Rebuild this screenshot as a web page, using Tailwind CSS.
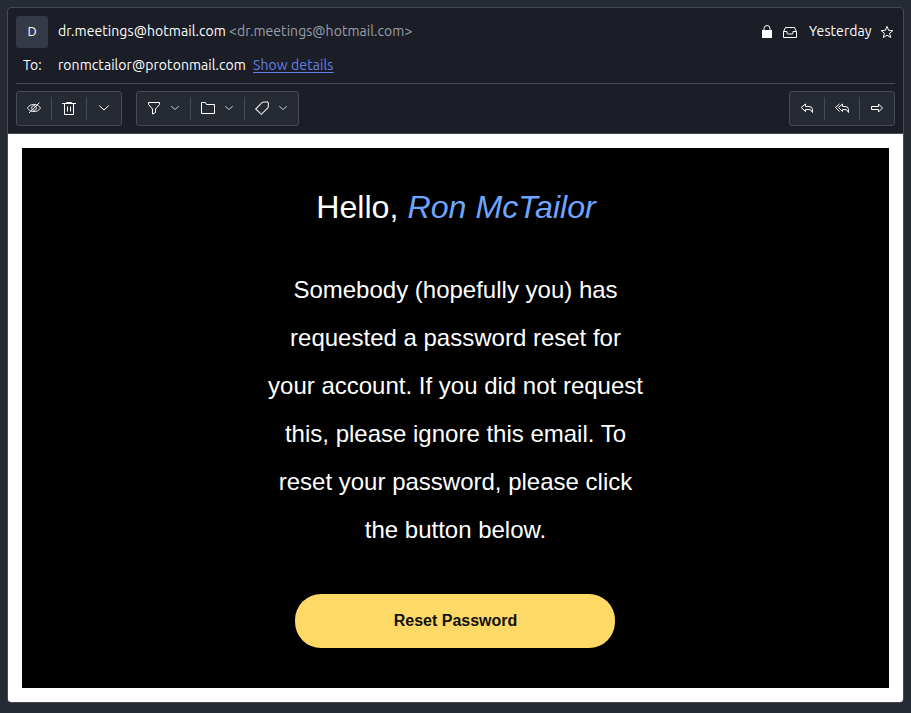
<!DOCTYPE html>
<html lang="en"><head><meta charset="utf-8"><title>Message</title>
<script src="https://cdn.jsdelivr.net/npm/@tailwindcss/browser@4"></script></head>
<body class="bg-[#262a33] h-[713px] overflow-hidden p-[7px] font-['Ubuntu','Open_Sans',sans-serif] text-[14px] text-white">
<main class="w-[897px] h-[696px] border border-[#464a55] rounded-[4px] overflow-hidden bg-[#1b1e26] flex flex-col">
<header class="h-[126px] shrink-0 border-b border-[#464a55] px-2 pt-2">
  <div class="flex h-8 items-start">
    <div class="w-8 h-8 rounded-[3px] bg-[#363a46] flex items-center justify-center text-[13px]">D</div>
    <div class="ml-[10px] pt-[5px] leading-5 w-[168px] whitespace-nowrap tracking-[0.07px]">dr.meetings@hotmail.com</div>
    <div class="ml-[3px] pt-[5px] leading-5 whitespace-nowrap tracking-[0.05px] text-[#9b9fab]">&lt;dr.meetings@hotmail.com&gt;</div>
    <div class="ml-auto flex items-start">
      <svg class="w-4 h-4 mt-2" viewBox="0 0 16 16"><path d="M3 6h10v8H3z" fill="#fff"/><path d="M5 6V4.500a3 3 0 0 1 6 0V6" fill="none" stroke="#fff"/></svg>
      <svg class="w-4 h-4 mt-2 ml-[7px]" viewBox="0 0 16 16" fill="none" stroke="#fff"><path d="M1.500 13.500v-6l2-4h9l2 4v6zM1.500 7.500H5v1.500q0 1 1 1h4q1 0 1-1V7.500h3.500"/></svg>
      <span class="ml-[11px] pt-[5px] leading-5 w-[63px] whitespace-nowrap tracking-[0.08px]">Yesterday</span>
      <svg class="w-4 h-4 mt-2 ml-[7px]" viewBox="0 0 16 16" fill="none" stroke="#fff"><path d="M8 2.400 9.600 6.300l4.300.3-3.300 2.700 1.100 4.200L8 11.200l-3.700 2.300 1.100-4.200-3.300-2.700 4.300-.3z"/></svg>
    </div>
  </div>
  <div class="flex h-9 pl-[7px] pt-[7px] border-b border-[#464a55] leading-5 whitespace-nowrap">
    <span class="w-[35px]">To:</span><span class="w-[195px] tracking-[0.06px]">ronmctailor@protonmail.com</span><a class="text-[#657ee4] underline underline-offset-2 tracking-[0.1px]">Show details</a>
  </div>
  <div class="flex mt-[7px]">
    <div class="w-[106px] h-[35px] border border-[#464a55] rounded-[3px] bg-[#262a33] flex items-start">
      <div class="w-[34px] pt-2 flex justify-center"><svg class="w-4 h-4" viewBox="0 0 16 16" fill="none" stroke="#e4e5e8"><path d="M1.500 8C4 3.200 12 3.200 14.500 8 12 12.800 4 12.800 1.500 8zM3 13 13.500 2.500"/><circle cx="8" cy="8" r="2.400"/></svg></div>
      <i class="w-px h-[23px] mt-[5px] bg-[#464a55]"></i>
      <div class="w-[34px] pt-2 flex justify-center"><svg class="w-4 h-4" viewBox="0 0 16 16" fill="none" stroke="#fff"><path d="M1 3.500h14M5.500 3.500v-1h5v1M3.500 3.500v11h9v-11M6.500 6.500v5M9.500 6.500v5"/></svg></div>
      <i class="w-px h-[23px] mt-[5px] bg-[#464a55]"></i>
      <div class="w-[34px] pt-2 flex justify-center"><svg class="w-4 h-4" viewBox="0 0 16 16" fill="none" stroke="#fff"><path d="m3.200 5.500 4.800 4.500 4.800-4.500"/></svg></div>
    </div>
    <div class="ml-[14px] w-[163px] h-[35px] border border-[#464a55] rounded-[3px] bg-[#262a33] flex items-start">
      <div class="w-[53px] pt-2 pl-[9px] flex"><svg class="w-4 h-4" viewBox="0 0 16 16" fill="none" stroke="#fff"><path d="M2.500 2.500h11v2l-4 4.500v3.500l-3 1.500V9l-4-4.500z"/></svg><svg class="w-4 h-4 ml-[5px]" viewBox="0 0 16 16" fill="none" stroke="#c6c8cd"><path d="M4.200 6.200 8 9.500l3.800-3.300"/></svg></div>
      <i class="w-px h-[23px] mt-[5px] bg-[#464a55]"></i>
      <div class="w-[53px] pt-2 pl-[9px] flex"><svg class="w-4 h-4" viewBox="0 0 16 16" fill="none" stroke="#fff"><path d="M1.500 13.500v-11h4l1 2h8v9z"/></svg><svg class="w-4 h-4 ml-[5px]" viewBox="0 0 16 16" fill="none" stroke="#c6c8cd"><path d="M4.200 6.200 8 9.500l3.800-3.300"/></svg></div>
      <i class="w-px h-[23px] mt-[5px] bg-[#464a55]"></i>
      <div class="w-[53px] pt-2 pl-[9px] flex"><svg class="w-4 h-4" viewBox="0 0 16 16" fill="none" stroke="#e8e8e8" stroke-width="1.100"><path d="m1.700 9 6.800-6.800 4.700-.4 1.300 1.400-.3 4.300-6.800 6.800z"/></svg><svg class="w-4 h-4 ml-[5px]" viewBox="0 0 16 16" fill="none" stroke="#c6c8cd"><path d="M4.200 6.200 8 9.500l3.800-3.300"/></svg></div>
    </div>
    <div class="ml-auto w-[106px] h-[35px] border border-[#464a55] rounded-[3px] bg-[#262a33] flex items-start">
      <div class="w-[34px] pt-2 flex justify-center"><svg class="w-4 h-4" viewBox="0 0 16 16" fill="none" stroke="#fff"><path d="M6.500 4 2.200 7.500l4.300 4V9.500H10q2.500 0 3.500 3v-3q0-3-3.500-3H6.500z"/></svg></div>
      <i class="w-px h-[23px] mt-[5px] bg-[#464a55]"></i>
      <div class="w-[34px] pt-2 flex justify-center"><svg class="w-4 h-4" viewBox="0 0 16 16" fill="none" stroke="#fff"><path d="M8.500 4 4.500 7.500l4 4V9.500H11q2.500 0 3.500 3v-3q0-3-3.500-3H8.500zM5.500 4l-4 3.500 4 4"/></svg></div>
      <i class="w-px h-[23px] mt-[5px] bg-[#464a55]"></i>
      <div class="w-[34px] pt-2 flex justify-center"><svg class="w-4 h-4" viewBox="0 0 16 16" fill="none" stroke="#fff"><path d="M2.500 6.500h7V4l4 4-4 4V9.500h-7z"/></svg></div>
    </div>
  </div>
</header>
<section class="bg-white flex-1 p-[14px]">
  <div class="bg-black h-[540px] font-['Liberation_Sans',Arial,sans-serif] flex flex-col items-center text-center">
    <h1 class="mt-[41px] text-[32.2px] leading-[37px] whitespace-nowrap pl-px">Hello, <em class="text-[#6ea6ff]">Ron McTailor</em></h1>
    <p class="mt-10 text-[24px] leading-[48px] whitespace-nowrap">Somebody (hopefully you) has<br>requested a password reset for<br>your account. If you did not request<br>this, please ignore this email. To<br>reset your password, please click<br>the button below.</p>
    <div class="mt-10 mr-px w-[320px] h-[54px] rounded-[26px] bg-[#ffd966] text-[#111] text-[16px] font-bold leading-[53px] pl-px">Reset Password</div>
  </div>
</section>
</main>
</body></html>
